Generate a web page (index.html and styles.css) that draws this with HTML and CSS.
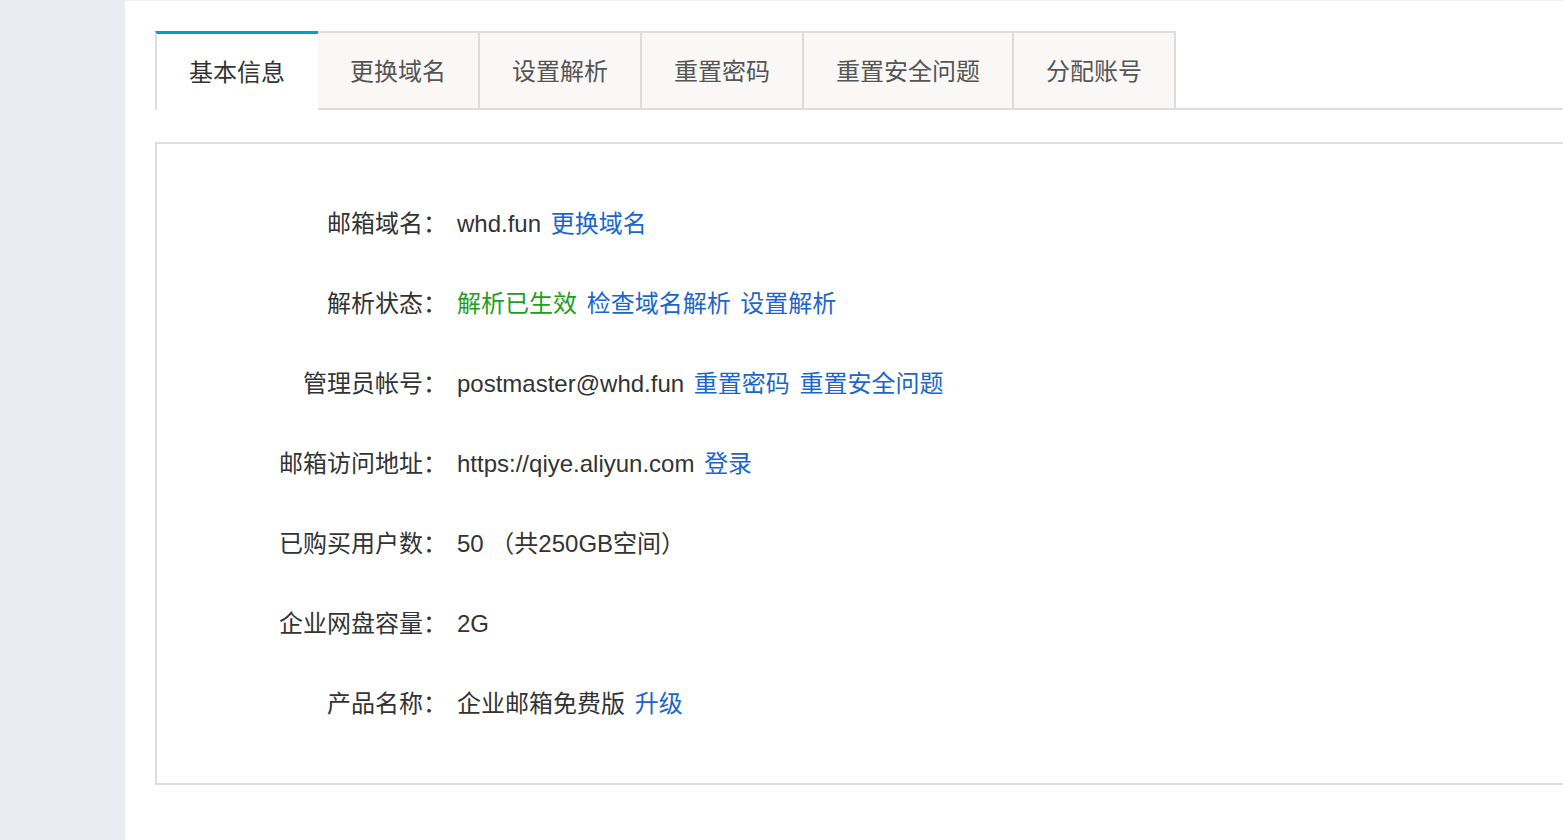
FILE: index.html
```html
<!DOCTYPE html>
<html lang="zh-CN">
<head>
    <meta charset="UTF-8">
    <meta name="viewport" content="width=device-width, initial-scale=1.0">
    <title>企业邮箱 - 基本信息</title>
    <link rel="stylesheet" href="styles.css">
</head>
<body>
    <div class="layout">
        <div class="sidebar"></div>

        <div class="main">
            <ul class="tabs">
                <li class="tab active">基本信息</li>
                <li class="tab">更换域名</li>
                <li class="tab">设置解析</li>
                <li class="tab">重置密码</li>
                <li class="tab">重置安全问题</li>
                <li class="tab">分配账号</li>
                <li class="tab-rest"></li>
            </ul>

            <div class="info-box">
                <div class="row">
                    <span class="label">邮箱域名：</span>
                    <span class="value">whd.fun <a href="#">更换域名</a></span>
                </div>
                <div class="row">
                    <span class="label">解析状态：</span>
                    <span class="value"><span class="ok">解析已生效</span> <a href="#">检查域名解析</a> <a href="#">设置解析</a></span>
                </div>
                <div class="row">
                    <span class="label">管理员帐号：</span>
                    <span class="value">postmaster@whd.fun <a href="#">重置密码</a> <a href="#">重置安全问题</a></span>
                </div>
                <div class="row">
                    <span class="label">邮箱访问地址：</span>
                    <span class="value">https://qiye.aliyun.com <a href="#">登录</a></span>
                </div>
                <div class="row">
                    <span class="label">已购买用户数：</span>
                    <span class="value">50 （共250GB空间）</span>
                </div>
                <div class="row">
                    <span class="label">企业网盘容量：</span>
                    <span class="value">2G</span>
                </div>
                <div class="row">
                    <span class="label">产品名称：</span>
                    <span class="value">企业邮箱免费版 <a href="#">升级</a></span>
                </div>
            </div>
        </div>
    </div>
</body>
</html>
```

FILE: styles.css
```css
html, body {
    margin: 0;
    padding: 0;
    height: 100%;
}
body {
    font-family: "Liberation Sans", "Noto Sans CJK SC", sans-serif;
    color: #333;
    background: #fff;
    overflow: hidden;
}
.layout {
    display: flex;
    height: 100%;
}
.sidebar {
    width: 125px;
    flex-shrink: 0;
    background-color: #e9edf2;
}
.main {
    flex: 1;
    border-top: 1px solid #f0f0f0;
    padding: 30px 0 0 30px;
    min-width: 0;
}
.tabs {
    display: flex;
    list-style: none;
    margin: 0;
    padding: 0;
    height: 79px;
}
.tab {
    box-sizing: border-box;
    height: 79px;
    padding: 0 32px 2px;
    display: flex;
    align-items: center;
    font-size: 24px;
    color: #555;
    background-color: #f9f8f7;
    border: 2px solid #ddd;
    border-left: none;
    cursor: pointer;
}
.tab.active {
    background-color: #fff;
    color: #333;
    border-top: 3px solid #00a0c8;
    border-left: 2px solid #ddd;
    border-right: none;
    border-bottom: none;
    width: 163px;
    padding-bottom: 4px;
}
.tab-rest {
    flex: 1;
    border-bottom: 2px solid #ddd;
}
.info-box {
    margin-top: 32px;
    margin-right: -10px;
    border: 2px solid #ddd;
    padding: 40px 0 39px;
}
.row {
    display: flex;
    height: 80px;
    line-height: 80px;
    font-size: 24px;
}
.label {
    width: 290px;
    text-align: right;
    color: #333;
}
.value {
    margin-left: 10px;
    color: #333;
}
.value a {
    color: #1a66cc;
    text-decoration: none;
    margin-left: 3px;
}
.ok {
    color: #1e9e1e;
}
```
